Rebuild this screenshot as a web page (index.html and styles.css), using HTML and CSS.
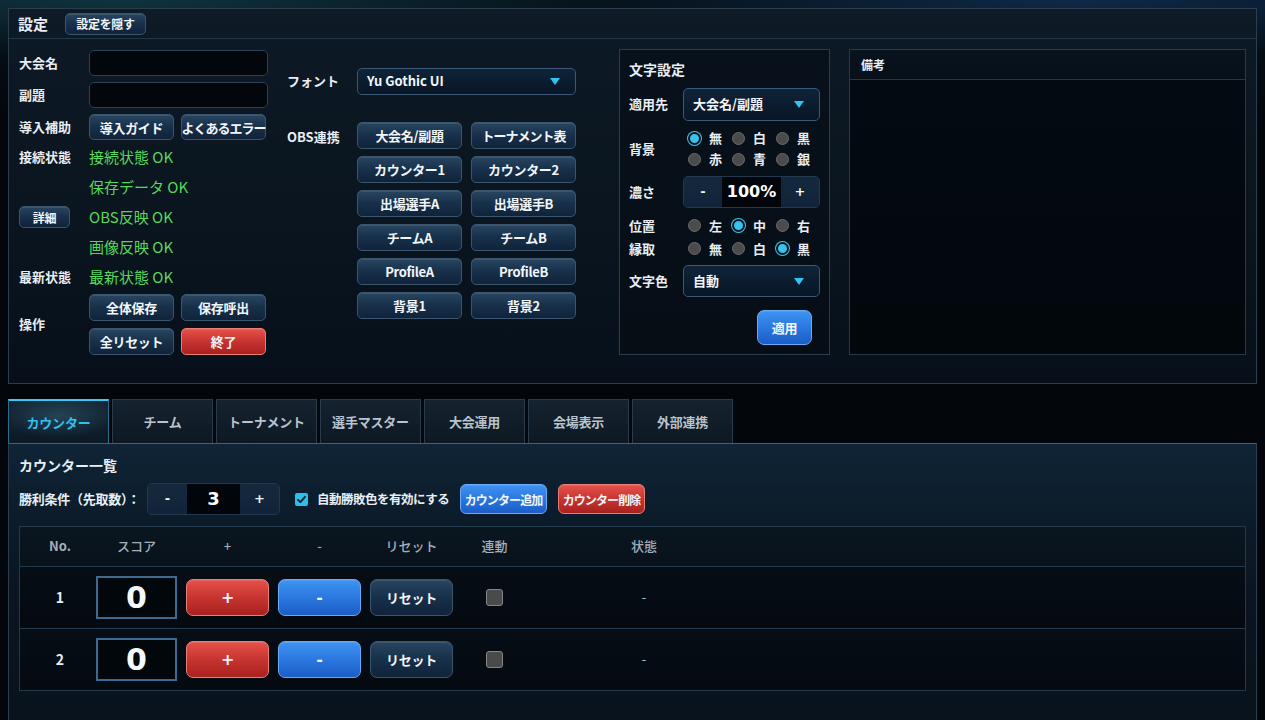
FILE: index.html
```html
<!DOCTYPE html>
<html lang="ja">
<head>
<meta charset="utf-8">
<title>設定</title>
<link rel="stylesheet" href="styles.css">
</head>
<body>
<section class="settings">
  <header class="settings-head">
    <h1 class="settings-title">設定</h1>
    <button class="btn btn-hide">設定を隠す</button>
  </header>
  <div class="settings-body">
    <div class="col-left">
      <div class="row"><span class="lbl">大会名</span><input class="text-input" type="text"></div>
      <div class="row mt6"><span class="lbl">副題</span><input class="text-input" type="text"></div>
      <div class="row mt6"><span class="lbl">導入補助</span>
        <div class="pair"><button class="btn btn-l">導入ガイド</button><button class="btn btn-l btn-tight">よくあるエラー</button></div>
      </div>
      <div class="status">
        <div class="srow"><span class="lbl">接続状態</span><span class="ok">接続状態 OK</span></div>
        <div class="srow"><span class="lbl"></span><span class="ok">保存データ OK</span></div>
        <div class="srow"><span class="lbl"><button class="btn btn-detail">詳細</button></span><span class="ok">OBS反映 OK</span></div>
        <div class="srow"><span class="lbl"></span><span class="ok">画像反映 OK</span></div>
        <div class="srow"><span class="lbl">最新状態</span><span class="ok">最新状態 OK</span></div>
      </div>
      <div class="row ops"><span class="lbl">操作</span>
        <div class="ops-grid">
          <button class="btn btn-op">全体保存</button>
          <button class="btn btn-op">保存呼出</button>
          <button class="btn btn-op">全リセット</button>
          <button class="btn btn-op btn-red">終了</button>
        </div>
      </div>
    </div>

    <div class="col-mid">
      <div class="row font-row"><span class="lbl">フォント</span>
        <div class="select sel-font"><span>Yu Gothic UI</span><span class="caret"></span></div>
      </div>
      <div class="row obs-row"><span class="lbl lbl-obs">OBS連携</span>
        <div class="obs-grid">
          <button class="btn btn-obs">大会名/副題</button>
          <button class="btn btn-obs btn-tight">トーナメント表</button>
          <button class="btn btn-obs">カウンター1</button>
          <button class="btn btn-obs">カウンター2</button>
          <button class="btn btn-obs">出場選手A</button>
          <button class="btn btn-obs">出場選手B</button>
          <button class="btn btn-obs">チームA</button>
          <button class="btn btn-obs">チームB</button>
          <button class="btn btn-obs">ProfileA</button>
          <button class="btn btn-obs">ProfileB</button>
          <button class="btn btn-obs">背景1</button>
          <button class="btn btn-obs">背景2</button>
        </div>
      </div>
    </div>

    <div class="char-panel">
      <h2 class="char-title">文字設定</h2>
      <div class="crow mt9"><span class="clbl">適用先</span>
        <div class="select sel-char h33"><span>大会名/副題</span><span class="caret"></span></div>
      </div>
      <div class="crow mt7"><span class="clbl">背景</span>
        <div class="radio-group">
          <div class="radio-row">
            <span class="radio-item"><span class="radio on"></span><span class="rl">無</span></span>
            <span class="radio-item"><span class="radio"></span><span class="rl">白</span></span>
            <span class="radio-item"><span class="radio"></span><span class="rl">黒</span></span>
          </div>
          <div class="radio-row">
            <span class="radio-item"><span class="radio"></span><span class="rl">赤</span></span>
            <span class="radio-item"><span class="radio"></span><span class="rl">青</span></span>
            <span class="radio-item"><span class="radio"></span><span class="rl">銀</span></span>
          </div>
        </div>
      </div>
      <div class="crow mt6"><span class="clbl">濃さ</span>
        <div class="stepper st-char"><span class="st-btn">-</span><span class="st-val">100%</span><span class="st-btn">+</span></div>
      </div>
      <div class="crow mt7 h22"><span class="clbl">位置</span>
        <div class="radio-row">
          <span class="radio-item"><span class="radio"></span><span class="rl">左</span></span>
          <span class="radio-item"><span class="radio on"></span><span class="rl">中</span></span>
          <span class="radio-item"><span class="radio"></span><span class="rl">右</span></span>
        </div>
      </div>
      <div class="crow mt1 h22"><span class="clbl">縁取</span>
        <div class="radio-row">
          <span class="radio-item"><span class="radio"></span><span class="rl">無</span></span>
          <span class="radio-item"><span class="radio"></span><span class="rl">白</span></span>
          <span class="radio-item"><span class="radio on"></span><span class="rl">黒</span></span>
        </div>
      </div>
      <div class="crow mt5"><span class="clbl">文字色</span>
        <div class="select sel-char h32"><span>自動</span><span class="caret"></span></div>
      </div>
      <div class="apply-row"><button class="btn btn-blue btn-apply">適用</button></div>
    </div>

    <div class="notes">
      <div class="notes-head">備考</div>
      <div class="notes-body"></div>
    </div>
  </div>
</section>

<nav class="tabs">
  <button class="tab active">カウンター</button>
  <button class="tab">チーム</button>
  <button class="tab">トーナメント</button>
  <button class="tab">選手マスター</button>
  <button class="tab">大会運用</button>
  <button class="tab">会場表示</button>
  <button class="tab">外部連携</button>
</nav>

<section class="content">
  <h2 class="content-title">カウンター一覧</h2>
  <div class="win-row">
    <span class="win-lbl">勝利条件（先取数）：</span>
    <div class="stepper st-win"><span class="st-btn">-</span><span class="st-val">3</span><span class="st-btn">+</span></div>
    <span class="check on"><svg viewBox="0 0 13 13" width="13" height="13"><path d="M3 6.8 L5.4 9.2 L10 3.8" fill="none" stroke="#0b2a3a" stroke-width="1.8" stroke-linecap="round" stroke-linejoin="round"/></svg></span>
    <span class="check-lbl">自動勝敗色を有効にする</span>
    <button class="btn btn-blue btn-act">カウンター追加</button>
    <button class="btn btn-red btn-act">カウンター削除</button>
  </div>

  <div class="table">
    <div class="trow thead">
      <span class="c-no">No.</span><span>スコア</span><span>+</span><span>-</span><span>リセット</span><span>連動</span><span>状態</span><span></span>
    </div>
    <div class="trow tbody">
      <span class="c-no">1</span>
      <span class="score">0</span>
      <button class="btn btn-red btn-row">+</button>
      <button class="btn btn-blue btn-row">-</button>
      <button class="btn btn-row">リセット</button>
      <span class="cell"><span class="tcheck"></span></span>
      <span class="state">-</span>
      <span></span>
    </div>
    <div class="trow tbody">
      <span class="c-no">2</span>
      <span class="score">0</span>
      <button class="btn btn-red btn-row">+</button>
      <button class="btn btn-blue btn-row">-</button>
      <button class="btn btn-row">リセット</button>
      <span class="cell"><span class="tcheck"></span></span>
      <span class="state">-</span>
      <span></span>
    </div>
  </div>
</section>
</body>
</html>
```
FILE: styles.css
```css
* { box-sizing: border-box; }

html, body { height: 100%; }

body {
  margin: 0;
  padding: 8px;
  overflow: hidden;
  font-family: "Noto Sans CJK JP", "Noto Sans", sans-serif;
  color: #e8eef4;
  line-height: 1.3;
  background:
    radial-gradient(ellipse 500px 60px at 10% 0, rgba(20, 80, 95, 0.55), rgba(0,0,0,0) 100%),
    radial-gradient(ellipse 500px 60px at 85% 0, rgba(20, 60, 110, 0.55), rgba(0,0,0,0) 100%),
    linear-gradient(180deg, #071119 0, #03070b 120px, #03070b 100%);
}

button {
  font-family: inherit;
  cursor: pointer;
}

/* ---------- generic controls ---------- */
.btn {
  display: flex;
  align-items: center;
  justify-content: center;
  padding: 0;
  border: 1px solid #3a566f;
  border-radius: 5px;
  background: linear-gradient(180deg, #284560 0%, #17304a 50%, #10233a 100%);
  box-shadow: inset 0 1px 0 rgba(255,255,255,0.10);
  color: #f2f6fa;
  font-size: 13px;
  font-weight: 700;
  white-space: nowrap;
  letter-spacing: -0.3px;
}

.btn-tight {
  letter-spacing: -1px;
}

.btn-red {
  border-color: #e77f76;
  background: linear-gradient(180deg, #e4524a 0%, #c83430 50%, #a8211f 100%);
}

.btn-blue {
  border-color: #67aaf6;
  background: linear-gradient(180deg, #3f92f2 0%, #2b78e0 50%, #1c5cc6 100%);
}

.text-input {
  width: 179px;
  height: 26px;
  background: #03070c;
  border: 1px solid #2b4155;
  border-radius: 5px;
  outline: none;
}

.select {
  display: flex;
  align-items: center;
  justify-content: space-between;
  padding: 0 16px 0 9px;
  border: 1px solid #3b5975;
  border-radius: 5px;
  background: linear-gradient(180deg, #0f2339 0%, #081626 100%);
  color: #f2f6fa;
  font-size: 13px;
  font-weight: 700;
}

.caret {
  width: 0;
  height: 0;
  border-left: 5px solid transparent;
  border-right: 5px solid transparent;
  border-top: 7px solid #32c4f0;
}

.stepper {
  display: flex;
  border: 1px solid #22384d;
  border-radius: 5px;
  overflow: hidden;
  background: #13273b;
}

.st-btn {
  display: flex;
  align-items: center;
  justify-content: center;
  background: linear-gradient(180deg, #15293e, #11233a);
  color: #f2f6fa;
  font-family: "DejaVu Sans", sans-serif;
  font-weight: 700;
  font-size: 13px;
}

.st-val {
  display: flex;
  align-items: center;
  justify-content: center;
  background: #02060a;
  color: #ffffff;
  font-family: "DejaVu Sans", sans-serif;
  font-weight: 700;
}

.radio-row {
  display: flex;
  align-items: center;
  height: 21px;
  padding-left: 5px;
}

.radio-item {
  display: flex;
  align-items: center;
  width: 44px;
}

.radio {
  width: 13px;
  height: 13px;
  border-radius: 50%;
  background: #4b4b4b;
  border: 1px solid #6b6b6b;
  flex: none;
}

.radio.on {
  background: #36c4ee;
  border: 2px solid #07141d;
  box-shadow: 0 0 0 1px #3dc8f0;
}

.rl {
  margin-left: 8px;
  font-size: 13px;
  font-weight: 700;
}

/* ---------- settings panel ---------- */
.settings {
  border: 1px solid #2b3e50;
  background: linear-gradient(180deg, #0d1925 0%, #0a151f 55%, #07101a 100%);
}

.settings-head {
  display: flex;
  align-items: center;
  gap: 17px;
  height: 30px;
  padding-left: 9px;
  border-bottom: 1px solid #223647;
  background: linear-gradient(180deg, #0f1c28, #0c1823);
}

.settings-title {
  margin: 0;
  font-size: 15px;
  font-weight: 700;
  line-height: 20px;
}

.btn-hide {
  width: 81px;
  height: 22px;
  font-size: 12px;
}

.settings-body {
  display: flex;
  align-items: flex-start;
  padding: 11px 10px 28px 10px;
}

.row {
  display: flex;
  align-items: center;
}

.mt1 { margin-top: 1px; }
.mt5 { margin-top: 5px; }
.mt6 { margin-top: 6px; }
.mt7 { margin-top: 7px; }
.mt9 { margin-top: 9px; }

.lbl {
  flex: none;
  width: 70px;
  font-size: 13px;
  font-weight: 700;
  color: #e8eef4;
}

.col-left {
  width: 249px;
  flex: none;
  display: flex;
  flex-direction: column;
}

.pair {
  display: flex;
  gap: 7px;
}

.btn-l {
  width: 85px;
  height: 26px;
}

.status {
  margin-top: 2px;
  display: flex;
  flex-direction: column;
}

.srow {
  display: flex;
  align-items: center;
  height: 30px;
}

.ok {
  color: #5ad85c;
  font-size: 15px;
  font-weight: 400;
  white-space: nowrap;
}

.btn-detail {
  width: 51px;
  height: 22px;
  font-size: 12px;
}

.ops {
  margin-top: 2px;
}

.ops-grid {
  display: grid;
  grid-template-columns: 85px 85px;
  gap: 7px;
}

.btn-op {
  height: 27px;
}

.col-mid {
  width: 289px;
  flex: none;
  margin-left: 19px;
  display: flex;
  flex-direction: column;
}

.font-row {
  margin-top: 18px;
}

.sel-font {
  width: 219px;
  height: 27px;
  padding-right: 15px;
}

.obs-row {
  margin-top: 27px;
  align-items: flex-start;
}

.lbl-obs {
  padding-top: 7px;
}

.obs-grid {
  display: grid;
  grid-template-columns: 105px 105px;
  column-gap: 9px;
  row-gap: 7px;
}

.btn-obs {
  height: 27px;
}

/* char panel */
.char-panel {
  flex: none;
  width: 211px;
  height: 306px;
  margin-left: 43px;
  margin-top: -1px;
  padding: 0 9px;
  border: 1px solid #2a3d50;
  background: linear-gradient(180deg, #08111b, #060d15);
}

.char-title {
  margin: 9px 0 0 0;
  font-size: 14px;
  font-weight: 700;
  line-height: 20px;
}

.crow {
  display: flex;
  align-items: center;
}

.h22 { height: 22px; }

.clbl {
  flex: none;
  width: 54px;
  font-size: 13px;
  font-weight: 700;
}

.sel-char {
  width: 137px;
  padding-right: 15px;
}

.h33 { height: 33px; }
.h32 { height: 32px; }

.radio-group {
  display: flex;
  flex-direction: column;
}

.st-char {
  width: 137px;
  height: 32px;
}

.st-char .st-btn { width: 38px; }
.st-char .st-val { flex: 1; font-size: 16px; }

.apply-row {
  display: flex;
  justify-content: flex-end;
  padding-right: 8px;
  margin-top: 13px;
}

.btn-apply {
  width: 55px;
  height: 35px;
  border-radius: 7px;
}

/* notes */
.notes {
  flex: 1;
  height: 306px;
  margin-left: 19px;
  margin-top: -1px;
  border: 1px solid #27394a;
  display: flex;
  flex-direction: column;
  background: #02070c;
}

.notes-head {
  height: 30px;
  padding-left: 11px;
  display: flex;
  align-items: center;
  font-size: 12px;
  font-weight: 700;
  background: linear-gradient(180deg, #09131d, #071019);
  border-bottom: 1px solid #243647;
}

.notes-body {
  flex: 1;
  background: linear-gradient(180deg, #030a11, #02070c);
}

/* ---------- tabs ---------- */
.tabs {
  display: flex;
  gap: 3px;
  margin-top: 15px;
}

.tab {
  width: 101px;
  height: 44px;
  padding: 0;
  border: 1px solid #2a3b4c;
  border-bottom: none;
  background: linear-gradient(180deg, #15222f 0%, #0d1822 100%);
  color: #b8c3ce;
  font-size: 13px;
  font-weight: 700;
  letter-spacing: -0.2px;
}

.tab.active {
  border-color: #2b6d8c;
  border-top: 2px solid #35c9f3;
  color: #34bfee;
  background:
    radial-gradient(ellipse 60px 22px at 50% 35%, rgba(60, 110, 130, 0.45), rgba(0,0,0,0) 100%),
    linear-gradient(180deg, #132434 0%, #0c1a27 100%);
}

/* ---------- content ---------- */
.content {
  min-height: 300px;
  padding: 11px 10px 30px 10px;
  border: 1px solid #2b3e50;
  border-top: 1px solid #2a6a88;
  background: linear-gradient(180deg, #0f2436 0%, #0c1c2b 70px, #0a1521 150px, #08121c 100%);
}

.content-title {
  margin: 0;
  font-size: 14px;
  font-weight: 700;
  line-height: 20px;
}

.win-row {
  display: flex;
  align-items: center;
  height: 32px;
  margin-top: 8px;
}

.win-lbl {
  width: 128px;
  flex: none;
  font-size: 13px;
  font-weight: 700;
  letter-spacing: -0.25px;
  white-space: nowrap;
}

.st-win {
  width: 133px;
  height: 32px;
}

.st-win .st-btn { width: 39px; }
.st-win .st-val { flex: 1; font-size: 18px; }

.check {
  width: 13px;
  height: 13px;
  margin-left: 15px;
  border-radius: 2px;
  background: #2fbde9;
  display: flex;
  flex: none;
}

.check svg path { stroke: #0d2433; }

.check-lbl {
  width: 143px;
  flex: none;
  margin-left: 9px;
  font-size: 12.5px;
  font-weight: 700;
  letter-spacing: -0.5px;
  white-space: nowrap;
}

.btn-act {
  width: 87px;
  height: 30px;
  border-radius: 6px;
  font-size: 12px;
  letter-spacing: -0.9px;
}

.btn-act + .btn-act {
  margin-left: 11px;
}

.table {
  margin-top: 11px;
  border: 1px solid #25394c;
  background: #050b12;
}

.trow {
  display: grid;
  grid-template-columns: 67px 81px 83px 83px 83px 65px 216px 1fr;
  column-gap: 9px;
  align-items: center;
  justify-items: center;
}

.thead {
  height: 39px;
  background: linear-gradient(180deg, #0a1620, #08121b);
  color: #a3afbb;
  font-size: 13px;
  font-weight: 500;
}

.thead .c-no { font-weight: 700; }

.c-no {
  padding-left: 13px;
  width: 100%;
  text-align: center;
  font-weight: 700;
  font-size: 13px;
}

.tbody {
  height: 62px;
  border-top: 1px solid #25394c;
  background: linear-gradient(180deg, #060d15, #050a11);
}

.tbody .c-no {
  color: #e8eef4;
  font-size: 14px;
}

.score {
  width: 81px;
  height: 43px;
  display: flex;
  align-items: center;
  justify-content: center;
  border: 2px solid #3d6a90;
  background: #02070c;
  color: #f4f8fb;
  font-family: "DejaVu Sans", sans-serif;
  font-weight: 700;
  font-size: 30px;
}

.btn-row {
  width: 83px;
  height: 37px;
  border-radius: 7px;
  font-size: 13px;
}

.btn-red.btn-row,
.btn-blue.btn-row {
  font-family: "DejaVu Sans", sans-serif;
  font-size: 16px;
}

.cell {
  display: flex;
  align-items: center;
  justify-content: center;
}

.tcheck {
  width: 17px;
  height: 17px;
  border-radius: 3px;
  background: #4a4a4a;
  border: 1px solid #868686;
}

.state {
  color: #b9c3cd;
  font-size: 13px;
}
```
